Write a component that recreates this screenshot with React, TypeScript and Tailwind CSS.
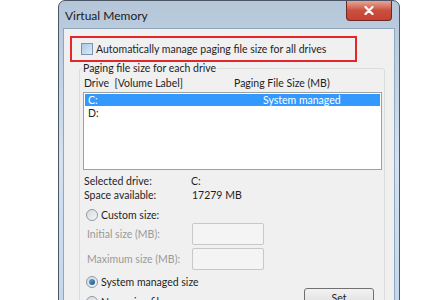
import React from 'react';

const font = { fontFamily: 'Lato, "Noto Sans", sans-serif' };

const Radio: React.FC<{ checked?: boolean }> = ({ checked }) => (
  <span className="relative inline-flex h-[12px] w-[12px] shrink-0 items-center justify-center rounded-full border border-[#8f9aa6] bg-gradient-to-br from-[#d6d9dd] to-[#f6f6f6]">
    {checked && (
      <span className="h-[6px] w-[6px] rounded-full bg-gradient-to-br from-[#5fa8e0] to-[#14578f]" />
    )}
  </span>
);

const App: React.FC = () => {
  return (
    <div className="h-[300px] w-[446px] overflow-hidden bg-white text-[10.5px] text-[#1e1e1e]" style={font}>
      <div className="ml-[58px] h-[320px] w-[342px] rounded-t-[7px] border border-[#4a5565] bg-gradient-to-b from-[#b4c6d8] via-[#d3e1f0] to-[#c3d6ea] px-[4px]">
        {/* title bar */}
        <div className="flex h-[27px] items-start justify-between">
          <span className="pl-[2px] pt-[8px] text-[12px] leading-[14px] text-[#1a1a1a]">Virtual Memory</span>
          <div className="mr-[3px] flex h-[20px] w-[46px] items-center justify-center rounded-b-[4px] border border-t-0 border-[#6b2a25] bg-gradient-to-b from-[#e8a496] via-[#c9503f] to-[#c8402f]">
            <svg width="10" height="9" viewBox="0 0 10 9">
              <path d="M1.5 1L8.5 8M8.5 1L1.5 8" stroke="white" strokeWidth="2.2" strokeLinecap="round" />
            </svg>
          </div>
        </div>

        {/* client area */}
        <div className="h-[300px] border border-[#8fa6bf] bg-[#f0f0f0] pl-[6px] pr-[6px] pt-[7px]">
          <div className="flex h-[26px] w-[287px] items-center border-2 border-[#e3262c] pl-[9px]">
            <span className="h-[12px] w-[12px] border border-[#7b95b1] bg-gradient-to-br from-[#a9c8e6] to-[#dcebf8]" />
            <span className="ml-[3px] leading-[12px]">Automatically manage paging file size for all drives</span>
          </div>

          {/* group box */}
          <div className="relative ml-[9px] mt-[6px] h-[260px] w-[306px] rounded-[3px] border border-[#dcdcdc]">
            <div className="-mt-[7px] ml-[2px] w-fit bg-[#f0f0f0] px-[1px] leading-[13px]">Paging file size for each drive</div>
            <div className="flex h-[14px] items-center pl-[4px] pt-[2px] leading-[12px]">
              <span className="w-[150px]">Drive&nbsp;&nbsp;[Volume Label]</span>
              <span>Paging File Size (MB)</span>
            </div>
            <div className="ml-[3px] mt-[3px] h-[78px] w-[299px] border border-[#a0a0a0] bg-white p-[1px]">
              <div className="flex h-[12px] items-center bg-[#3399ff] pl-[3px] leading-[12px] text-white">
                <span className="w-[175px]">C:</span>
                <span>System managed</span>
              </div>
              <div className="flex h-[14px] items-center pl-[3px] leading-[12px]">D:</div>
            </div>

            <div className="mt-[4px] flex h-[14px] items-center pl-[4px] leading-[12px]">
              <span className="w-[107px]">Selected drive:</span>
              <span>C:</span>
            </div>
            <div className="flex h-[14px] items-center pl-[4px] leading-[12px]">
              <span className="w-[108px]">Space available:</span>
              <span>17279 MB</span>
            </div>

            <div className="mt-[6px] flex h-[14px] items-center gap-[3px] pl-[6px] leading-[12px]">
              <Radio />
              <span>Custom size:</span>
            </div>
            <div className="mt-[1px] flex h-[22px] items-center pl-[7px] leading-[12px] text-[#9a9a9a]">
              <span className="w-[105px]">Initial size (MB):</span>
              <span className="h-[22px] w-[72px] rounded-[2px] border border-[#c8c8c8] bg-[#f4f4f4]" />
            </div>
            <div className="mt-[3px] flex h-[22px] items-center pl-[7px] leading-[12px] text-[#9a9a9a]">
              <span className="w-[105px]">Maximum size (MB):</span>
              <span className="h-[22px] w-[72px] rounded-[2px] border border-[#c8c8c8] bg-[#f4f4f4]" />
            </div>
            <div className="mt-[4px] flex h-[16px] items-center gap-[3px] pl-[6px] leading-[12px]">
              <Radio checked />
              <span>System managed size</span>
            </div>
            <div className="flex h-[18px] items-end justify-between pl-[6px] pr-[10px] leading-[12px]">
              <span className="flex items-center gap-[3px]">
                <Radio />
                <span>No paging file</span>
              </span>
              <span className="flex h-[20px] w-[70px] items-center justify-center rounded-[3px] border border-[#707070] bg-gradient-to-b from-[#f2f2f2] to-[#dddddd]">
                Set
              </span>
            </div>
          </div>
        </div>
      </div>
    </div>
  );
};

export default App;
